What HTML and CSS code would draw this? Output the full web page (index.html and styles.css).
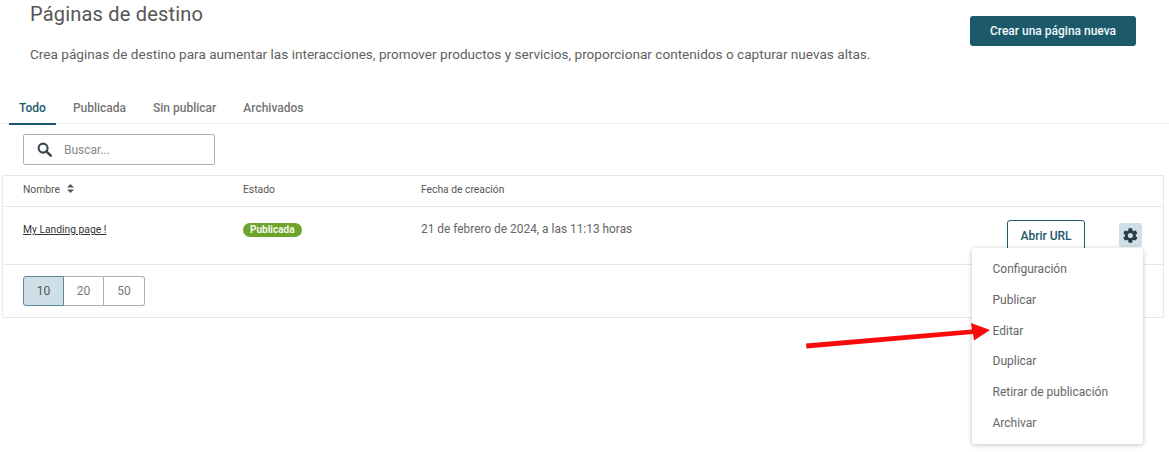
FILE: index.html
```html
<html>
<head>
  <meta charset="UTF-8">
  <title>Páginas de destino</title>
  <link rel="stylesheet" href="styles.css">
</head>
<body>
  <div class="header">
    <div class="intro">
      <h1>Páginas de destino</h1>
      <p>Crea páginas de destino para aumentar las interacciones, promover productos y servicios, proporcionar contenidos o capturar nuevas altas.</p>
    </div>
    <button class="btn-primary">Crear una página nueva</button>
  </div>

  <div class="tabs">
    <div class="tab active">Todo</div>
    <div class="tab">Publicada</div>
    <div class="tab">Sin publicar</div>
    <div class="tab">Archivados</div>
  </div>

  <div class="search">
    <svg class="search-icon" width="15" height="15" viewBox="0 0 16 16"><circle cx="6.5" cy="6.5" r="4.8" fill="none" stroke="#37474f" stroke-width="2.200"/><path d="M10 10l4.600 4.600" stroke="#37474f" stroke-width="2.600" stroke-linecap="round"/></svg>
    <span>Buscar...</span>
  </div>

  <div class="table">
    <div class="row head">
      <div class="col-name">Nombre
        <svg class="sort" width="7" height="9" viewBox="0 0 7 9"><path d="M3.500 0L7 3.600H0zM3.500 9L0 5.400h7z" fill="#555"/></svg>
      </div>
      <div class="col-state">Estado</div>
      <div class="col-date">Fecha de creación</div>
    </div>
    <div class="row item">
      <div class="col-name"><a href="#">My Landing page !</a></div>
      <div class="col-state"><span class="badge">Publicada</span></div>
      <div class="col-date">21 de febrero de 2024, a las 11:13 horas</div>
      <div class="col-actions">
        <button class="btn-outline">Abrir URL</button>
        <div class="gear">
          <svg width="17" height="17" viewBox="0 0 24 24"><path fill="#263f4a" fill-rule="evenodd" d="M19.400 13c.04-.33.06-.66.06-1s-.02-.67-.06-1l2.160-1.680c.2-.15.25-.43.12-.65l-2.050-3.540c-.12-.22-.39-.31-.62-.22l-2.550 1.020c-.53-.4-1.100-.74-1.730-1L14.350 2.200c-.04-.24-.25-.42-.5-.42h-4.100c-.25 0-.46.18-.5.42L8.870 4.930c-.62.26-1.200.6-1.730 1L4.600 4.910c-.23-.09-.5 0-.62.22L1.930 8.670c-.13.22-.08.5.12.65L4.200 11c-.04.33-.07.67-.07 1s.03.67.07 1l-2.150 1.680c-.2.15-.25.43-.12.65l2.050 3.540c.12.22.39.31.62.22l2.540-1.020c.53.4 1.110.74 1.730 1l.38 2.730c.04.24.25.42.5.42h4.100c.25 0 .46-.18.5-.42l.38-2.730c.63-.26 1.200-.6 1.730-1l2.550 1.020c.23.09.5 0 .62-.22l2.050-3.540c.13-.22.08-.5-.12-.65zM11.800 15.600a3.600 3.600 0 1 1 0-7.200 3.600 3.600 0 0 1 0 7.200z"/></svg>
        </div>
      </div>
    </div>
    <div class="pager">
      <div class="page-size active">10</div>
      <div class="page-size">20</div>
      <div class="page-size">50</div>
    </div>
  </div>

  <div class="menu">
    <div>Configuración</div>
    <div>Publicar</div>
    <div>Editar</div>
    <div>Duplicar</div>
    <div>Retirar de publicación</div>
    <div>Archivar</div>
  </div>

  <svg class="arrow" width="190" height="40" viewBox="0 0 190 40"><path d="M0 23.500L166 9.500 165 3 184 10 168 20.500 167 14 0.500 28.500z" fill="#f80a0a"/></svg>
</body>
</html>
```

FILE: styles.css
```css
body {
  font-family: Roboto, "Liberation Sans", sans-serif;
  background: #fff;
  color: #555;
  margin: 0;
  height: 452px;
  overflow: hidden;
  position: relative;
}
.header {
  display: flex;
  justify-content: space-between;
  padding: 0 33px 0 30px;
  height: 92px;
}
.intro h1 {
  font-size: 20px;
  font-weight: 400;
  letter-spacing: 0.2px;
  line-height: 24px;
  margin: 2px 0 18px;
  color: #555;
}
.intro p {
  font-size: 13.600px;
  line-height: 20px;
  margin: 0;
  color: #616161;
}
.btn-primary {
  background: #1c5a6b;
  color: #f4f8f9;
  border: 0;
  border-radius: 3px;
  width: 166px;
  height: 30px;
  margin-top: 16px;
  font: 500 12px Roboto, sans-serif;
}
.tabs {
  display: flex;
  padding-left: 9px;
  border-bottom: 1px solid #eee;
  height: 31px;
}
.tab {
  font-size: 12px;
  font-weight: 500;
  color: #757575;
  padding: 9px 10px 0;
  margin-right: 7px;
}
.tab.active {
  color: #1c5a6b;
  border-bottom: 2px solid #1c5a6b;
  height: 22px;
}
.search {
  display: flex;
  align-items: center;
  gap: 12px;
  box-sizing: border-box;
  width: 192px;
  height: 31px;
  margin: 10px 0 10px 23px;
  padding-left: 13px;
  border: 1px solid #a9b4b8;
  border-radius: 2px;
  font-size: 12px;
  color: #888;
}
.table {
  margin: 0 5px 0 2px;
  border: 1px solid #e8e8e8;
}
.row {
  display: flex;
  border-bottom: 1px solid #e8e8e8;
}
.head {
  box-sizing: border-box;
  height: 31px;
  padding-bottom: 4px;
  align-items: center;
  font-size: 10.300px;
  color: #555;
}
.item {
  height: 57px;
  font-size: 11.900px;
  color: #666;
}
.col-name {
  width: 220px;
  padding-left: 20px;
}
.col-state {
  width: 178px;
}
.item .col-date {
  padding-top: 15px;
}
.item .col-name, .item .col-state {
  padding-top: 16px;
}
.col-name a {
  color: #333;
  font-size: 10.300px;
}
.sort {
  margin-left: 5px;
}
.badge {
  background: #6da32a;
  color: #f2f7ea;
  font-size: 10px;
  font-weight: 700;
  border-radius: 7px;
  padding: 0 7px;
  line-height: 14px;
  display: inline-block;
}
.col-actions {
  margin-left: auto;
  display: flex;
  gap: 34px;
  padding: 13px 21px 0 0;
}
.btn-outline {
  background: #fff;
  color: #1c5a6b;
  border: 1px solid #1c5a6b;
  border-radius: 3px;
  width: 78px;
  height: 31px;
  font: 500 12px Roboto, sans-serif;
}
.gear {
  width: 23px;
  height: 24px;
  margin-top: 3px;
  border-radius: 2px;
  background: #cfdfe7;
  display: flex;
  align-items: center;
  justify-content: center;
}
.pager {
  display: flex;
  padding: 11px 0 11px 20px;
}
.page-size {
  box-sizing: border-box;
  width: 40px;
  height: 30px;
  line-height: 29px;
  text-align: center;
  font-size: 12px;
  color: #777;
  border: 1px solid #a9b4b8;
  border-left: 0;
}
.page-size:first-child {
  width: 41px;
  border-left: 1px solid #5d8798;
  border-color: #5d8798;
  border-radius: 3px 0 0 3px;
}
.page-size:last-child {
  width: 41px;
  border-radius: 0 3px 3px 0;
}
.page-size.active {
  background: #cfdfe7;
  color: #555;
}
.menu {
  position: absolute;
  left: 972px;
  top: 248px;
  width: 171px;
  height: 196px;
  box-sizing: border-box;
  padding-top: 6px;
  background: #fff;
  border-radius: 3px;
  box-shadow: 0 1px 5px rgba(0,0,0,0.25);
  font-size: 12px;
  color: #666;
}
.menu div {
  height: 30.800px;
  line-height: 31.500px;
  padding-left: 20.500px;
}
.arrow {
  position: absolute;
  left: 806px;
  top: 320px;
}
```
